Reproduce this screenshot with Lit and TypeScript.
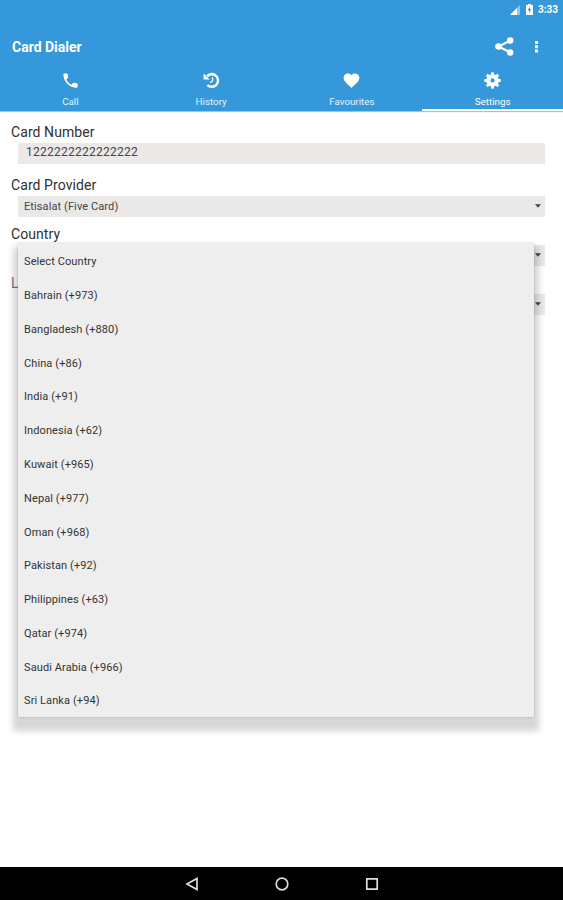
import { LitElement, html, svg, css } from "lit";
import { customElement } from "lit/decorators.js";
import { classMap } from "lit/directives/class-map.js";

const icons = {
  call: svg`<path d="M6.62 10.79c1.44 2.83 3.76 5.14 6.59 6.59l2.2-2.2c.27-.27.67-.36 1.02-.24 1.12.37 2.33.57 3.57.57.55 0 1 .45 1 1V20c0 .55-.45 1-1 1-9.39 0-17-7.61-17-17 0-.55.45-1 1-1h3.5c.55 0 1 .45 1 1 0 1.25.2 2.45.57 3.57.11.35.03.74-.25 1.02l-2.2 2.2z"/>`,
  history: svg`<path d="M6.400 6.500A8 8 0 1 1 6.800 17.800" fill="none" stroke="currentColor" stroke-width="3.2"/><path d="M2 3v7.800h7.800z"/><path d="M13.400 8v4.600l-3.200 2" fill="none" stroke="currentColor" stroke-width="1.600"/>`,
  favourites: svg`<path d="M12 21.35l-1.45-1.32C5.4 15.36 2 12.28 2 8.5 2 5.42 4.42 3 7.5 3c1.74 0 3.41.81 4.5 2.09C13.09 3.81 14.76 3 16.5 3 19.58 3 22 5.42 22 8.5c0 3.78-3.4 6.86-8.55 11.54L12 21.35z"/>`,
  settings: svg`<g transform="translate(1 .2) scale(.92)"><path fill-rule="evenodd" d="M10.400 1.500h3.200l.8 3.300 1.500.6 2.900-1.700 2.300 2.300-1.700 2.900.6 1.500 3.300.8v3.200l-3.300.8-.6 1.500 1.700 2.900-2.300 2.300-2.900-1.700-1.500.6-.8 3.300h-3.200l-.8-3.300-1.500-.6-2.900 1.700-2.300-2.300 1.700-2.900-.6-1.500-3.300-.8v-3.200l3.300-.8.6-1.500L2.900 6l2.300-2.300 2.900 1.700 1.500-.6zM12 9.800a2.900 2.900 0 1 0 0 5.800 2.900 2.900 0 1 0 0-5.800z"/></g>`,
};

const tabs = [
  { label: "Call", icon: icons.call },
  { label: "History", icon: icons.history },
  { label: "Favourites", icon: icons.favourites },
  { label: "Settings", icon: icons.settings, active: true },
];

const countries = [
  "Select Country", "Bahrain (+973)", "Bangladesh (+880)", "China (+86)",
  "India (+91)", "Indonesia (+62)", "Kuwait (+965)", "Nepal (+977)",
  "Oman (+968)", "Pakistan (+92)", "Philippines (+63)", "Qatar (+974)",
  "Saudi Arabia (+966)", "Sri Lanka (+94)",
];

@customElement("app-root")
export class AppRoot extends LitElement {
  static styles = css`
    :host {
      display: flex;
      flex-direction: column;
      height: 900px;
      overflow: hidden;
      background: #fff;
      color: #333;
      font-family: Roboto, "Liberation Sans", sans-serif;
    }
    svg { display: block; fill: currentColor; }
    header { background: #3498db; color: #fff; height: 111px; flex: none; box-shadow: 0 1px 1px #bbb; }
    .status {
      height: 19px; display: flex; align-items: center; justify-content: flex-end;
      padding-right: 5px; font-size: 10px; font-weight: 700;
    }
    .signal { margin-right: 6px; }
    .battery { margin-right: 5px; }
    .bar { height: 54px; display: flex; align-items: center; padding: 0 22px 0 12px; }
    h1 { margin: 0 auto 0 0; font-size: 14px; line-height: 20px; font-weight: 700; padding-top: 2px; }
    .share { margin-right: 18px; }
    nav { display: flex; height: 38px; }
    .tab {
      flex: 1; display: flex; flex-direction: column; align-items: center;
      box-sizing: border-box; font-size: 9.8px; line-height: 12px;
      border-bottom: 2px solid transparent; color: #e3f2ff;
    }
    .tab svg { color: #fff; margin: -2px 0 6px; }
    .active { border-bottom-color: #fff; color: #fff; }
    main { position: relative; flex: 1; padding: 12px 18px 0; }
    .label { margin-left: -7px; font-size: 14px; line-height: 18px; height: 20px; color: #303030; letter-spacing: .08px; }
    .dim { color: #777; }
    .field {
      box-sizing: border-box; height: 21px; display: flex; align-items: center;
      background: #ebe8e8; padding: 0 3px 0 6px; font-size: 11px; color: #444;
      letter-spacing: .1px;
    }
    .number { padding: 0 8px 3px; font-size: 12px; margin-bottom: 12px; letter-spacing: .25px; }
    .select { justify-content: space-between; margin-bottom: 8px; }
    .menu {
      position: absolute; left: 18px; top: 132px; width: 516px; height: 473.5px;
      box-sizing: border-box; padding-top: 1.4px; display: flex; flex-direction: column;
      background: #eee;
      box-shadow: 0 0 2px rgba(0,0,0,.2), 0 9px 6px 5px rgba(0,0,0,.16);
    }
    .option {
      height: 33.77px; line-height: 36px; flex: none; padding-left: 6px;
      font-size: 11px; color: #333; letter-spacing: .1px;
    }
    footer {
      height: 33px; flex: none; background: #000; color: #ddd;
      display: flex; align-items: center; justify-content: center; gap: 74px;
    }
    footer svg { fill: none; stroke: currentColor; stroke-width: 1.7; }
  `;

  private select(text = "") {
    return html`<div class="field select"><span>${text}</span
      ><svg width="8" height="5" viewBox="0 0 8 5"><path d="M1 .3h6L4 3.800z"/></svg></div>`;
  }

  render() {
    return html`
      <header>
        <div class="status">
          <svg class="signal" width="10" height="10" viewBox="0 0 10 10"><path d="M10 0v10H0z" opacity=".45"/><path d="M7 3v7H0z"/></svg>
          <svg class="battery" width="7" height="11" viewBox="0 0 7 11"><path fill-rule="evenodd" d="M2 0h3v1h2v10H0V1h2zM4 2.500L1.500 6.200h1.700V9l2.300-3.800H4z"/></svg>
          <span>3:33</span>
        </div>
        <div class="bar">
          <h1>Card Dialer</h1>
          <svg class="share" width="19" height="19" viewBox="0 0 19 19"><path d="M15.500 3.500L3.500 9.500l12 6" fill="none" stroke="currentColor" stroke-width="2.200"/><circle cx="15.200" cy="3.500" r="3.200"/><circle cx="3.500" cy="9.500" r="3.300"/><circle cx="15.200" cy="15.500" r="3.200"/></svg>
          <svg width="9" height="13" viewBox="0 0 9 13"><path d="M3 1h3v3H3zM3 5.200h3v3H3zM3 9.400h3v3H3z"/></svg>
        </div>
        <nav>
          ${tabs.map((t) => html`<div class=${classMap({ tab: true, active: !!t.active })}>
            <svg width="19" height="19" viewBox="0 0 24 24">${t.icon}</svg>${t.label}</div>`)}
        </nav>
      </header>
      <main>
        <div class="label">Card Number</div>
        <div class="field number">1222222222222222</div>
        <div class="label">Card Provider</div>
        ${this.select("Etisalat (Five Card)")}
        <div class="label">Country</div>
        ${this.select()}
        <div class="label dim">L</div>
        ${this.select()}
        <div class="menu">${countries.map((c) => html`<div class="option">${c}</div>`)}</div>
      </main>
      <footer>
        <svg width="16" height="16" viewBox="0 0 16 16"><path d="M13 2.500v11L3 8z"/></svg>
        <svg width="16" height="16" viewBox="0 0 16 16"><circle cx="8" cy="8" r="5.800"/></svg>
        <svg width="16" height="16" viewBox="0 0 16 16"><path d="M2.800 2.800h10.400v10.400H2.800z"/></svg>
      </footer>
    `;
  }
}
